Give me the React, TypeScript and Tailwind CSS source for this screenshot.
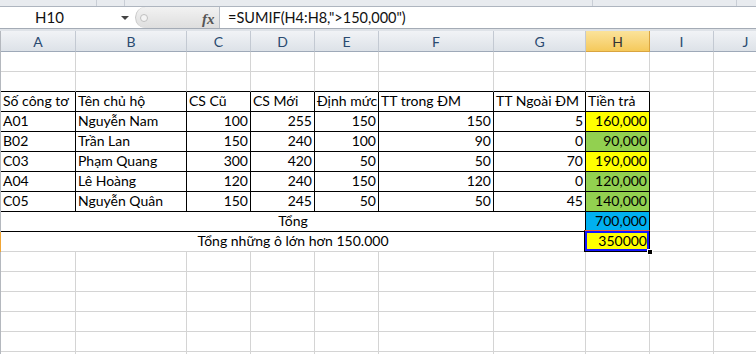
type Fill = 'yellow' | 'green' | 'blue' | undefined

interface Row {
  id: string
  name: string
  cu: number
  moi: number
  dm: number
  trong: number
  ngoai: number
  tien: string
  fill: Fill
}

const rows: Row[] = [
  { id: 'A01', name: 'Nguyễn Nam', cu: 100, moi: 255, dm: 150, trong: 150, ngoai: 5, tien: '160,000', fill: 'yellow' },
  { id: 'B02', name: 'Trần Lan', cu: 150, moi: 240, dm: 100, trong: 90, ngoai: 0, tien: '90,000', fill: 'green' },
  { id: 'C03', name: 'Phạm Quang', cu: 300, moi: 420, dm: 50, trong: 50, ngoai: 70, tien: '190,000', fill: 'yellow' },
  { id: 'A04', name: 'Lê Hoàng', cu: 120, moi: 240, dm: 150, trong: 120, ngoai: 0, tien: '120,000', fill: 'green' },
  { id: 'C05', name: 'Nguyễn Quân', cu: 150, moi: 245, dm: 50, trong: 50, ngoai: 45, tien: '140,000', fill: 'green' },
]

const headers = ['Số công tơ', 'Tên chủ hộ', 'CS Cũ', 'CS Mới', 'Định mức', 'TT trong ĐM', 'TT Ngoài ĐM', 'Tiền trả']
const cols = ['A', 'B', 'C', 'D', 'E', 'F', 'G', 'H', 'I', 'J']

const GRID = 'grid grid-cols-[1px_75px_111px_64px_64px_64px_115px_92px_64px_64px_64px]'
const fillClass: Record<string, string> = {
  yellow: 'bg-[#ffff00]',
  green: 'bg-[#92d050]',
  blue: 'bg-[#00b0f0]',
}

function Cell({
  children, right, black, blackB, fill, className = '',
}: {
  children?: React.ReactNode
  right?: boolean
  black?: boolean
  blackB?: boolean
  fill?: Fill
  className?: string
}) {
  const rc = black ? 'border-r-black' : 'border-r-[#d4d4d4]'
  const bc = black || blackB ? 'border-b-black' : 'border-b-[#d4d4d4]'
  return (
    <div
      className={`h-[20px] border-r border-b ${rc} ${bc} ${fill ? fillClass[fill] : ''} flex items-end overflow-visible whitespace-nowrap px-[2px] pb-[1px] leading-[18px] ${right ? 'justify-end' : 'justify-start'} ${className}`}
    >
      {children}
    </div>
  )
}

function Edge({ active }: { active?: boolean }) {
  return <div className={`h-[20px] ${active ? 'bg-[#f0a535]' : 'bg-[#b4b8be]'}`} />
}

function BlankRow({ blackB }: { blackB?: boolean }) {
  return (
    <div className={GRID}>
      <Edge />
      {cols.map((c, i) => (
        <Cell key={c} blackB={blackB && i < 8} />
      ))}
    </div>
  )
}

export default function App() {
  return (
    <div
      className="w-[756px] h-[354px] overflow-hidden bg-white text-black text-[14px]"
      style={{ fontFamily: 'Lato, "Open Sans", sans-serif' }}
    >
      {/* ribbon bottom */}
      <div className="h-[7px] bg-[#e8ebef] border-b border-[#aeb5bf] flex">
        <div className="w-[97px] border-r border-[#c9ced6]" />
        <div className="w-[28px] border-r border-[#c9ced6]" />
        <div className="w-[468px] border-r border-[#c9ced6]" />
        <div className="w-[144px] border-r border-[#c9ced6]" />
      </div>

      {/* formula bar */}
      <div className="h-[22px] flex border-b border-[#a4abb5] bg-white">
        <div className="w-[135px] flex items-center relative">
          <span className="ml-[35px] text-[15px] text-[#111]">H10</span>
          <div className="absolute left-[121px] top-[9px] w-0 h-0 border-l-[4px] border-r-[4px] border-t-[4px] border-l-transparent border-r-transparent border-t-[#444]" />
        </div>
        <div className="w-[84px] flex items-center bg-gradient-to-b from-[#f2f2f2] to-[#dedede] rounded-l-[11px] border-l border-[#c8c8c8] relative">
          <div className="ml-[4px] w-[8px] h-[8px] rounded-full bg-[#f4f4f4] border border-[#c0c0c0]" />
          <span
            className="absolute left-[66px] top-[1px] italic font-bold text-[15px] text-[#555]"
            style={{ fontFamily: '"Liberation Serif", serif' }}
          >
            fx
          </span>
        </div>
        <div className="w-px bg-[#b8bec7]" />
        <div className="flex-1 flex items-center pl-[8px] text-[14.5px] text-[#111]">=SUMIF(H4:H8,"&gt;150,000")</div>
      </div>
      <div className="h-[2px] bg-[#dfe3e8]" />

      {/* column headers */}
      <div className={GRID}>
        <div className="h-[21px] bg-[#b4b8be]" />
        {cols.map(c => (
          <div
            key={c}
            className={`h-[21px] border-r border-b flex items-center justify-center text-[14px] ${
              c === 'H'
                ? 'bg-gradient-to-b from-[#fbe39a] to-[#f5c95a] border-[#d9a440] text-[#333]'
                : 'bg-gradient-to-b from-[#f1f3f6] to-[#dde2e8] border-r-[#c3c9d2] border-b-[#9ea9b8] text-[#2a4a70]'
            }`}
          >
            {c}
          </div>
        ))}
      </div>

      <BlankRow />
      <BlankRow blackB />

      {/* table header */}
      <div className={GRID}>
        <Edge />
        {headers.map(h => (
          <Cell key={h} black>{h}</Cell>
        ))}
        <Cell />
        <Cell />
      </div>

      {rows.map(r => (
        <div key={r.id} className={GRID}>
          <Edge />
          <Cell black>{r.id}</Cell>
          <Cell black>{r.name}</Cell>
          <Cell black right>{r.cu}</Cell>
          <Cell black right>{r.moi}</Cell>
          <Cell black right>{r.dm}</Cell>
          <Cell black right>{r.trong}</Cell>
          <Cell black right>{r.ngoai}</Cell>
          <Cell black right fill={r.fill}>{r.tien}</Cell>
          <Cell />
          <Cell />
        </div>
      ))}

      {/* Tổng */}
      <div className={GRID}>
        <Edge />
        <Cell black className="col-span-7 !justify-center">Tổng</Cell>
        <Cell black right fill="blue">700,000</Cell>
        <Cell />
        <Cell />
      </div>

      {/* Tổng những ô lớn hơn */}
      <div className={GRID}>
        <Edge active />
        <Cell className="col-span-7 !justify-center">Tổng những ô lớn hơn 150.000</Cell>
        <div className="relative">
          <Cell right fill="yellow">350000</Cell>
          <div className="absolute left-[-2px] top-[-2px] w-[66px] h-[22px] border border-black border-t-[#e8603c]">
            <div className="w-full h-full border-2 border-[#1414ff]" />
            <div className="absolute right-[-4px] bottom-[-4px] w-[6px] h-[6px] bg-black border border-white" />
          </div>
        </div>
        <Cell />
        <Cell />
      </div>

      {Array.from({ length: 6 }).map((_, i) => (
        <BlankRow key={i} />
      ))}
    </div>
  )
}
